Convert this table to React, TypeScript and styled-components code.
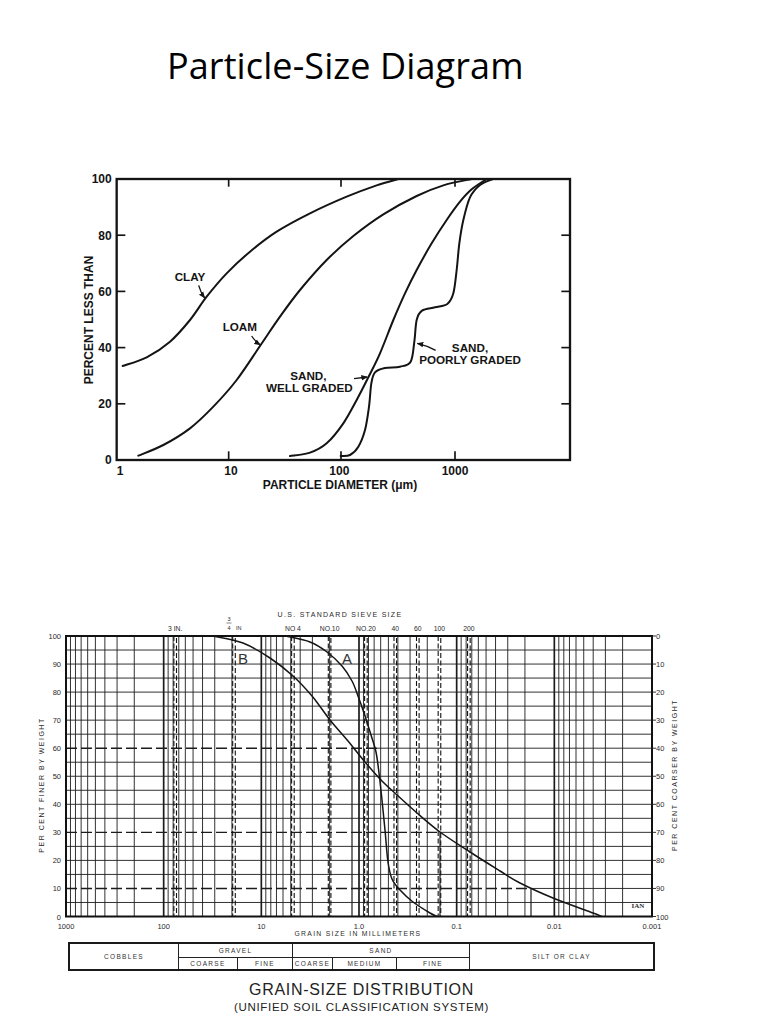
import React from 'react';
import styled, { createGlobalStyle } from 'styled-components';

type Pt = [number, number];

const GlobalStyle = createGlobalStyle`
  html, body {
    margin: 0;
    padding: 0;
    background: #fff;
  }
`;

const Page = styled.main`
  width: 768px;
  height: 1024px;
  overflow: hidden;
  background: #fff;
`;

const Title = styled.h1`
  margin: 0;
  padding: 44px 0 0 167px;
  height: 44px;
  font: 400 36px/44px 'Open Sans', 'Liberation Sans', sans-serif;
  letter-spacing: 0.1px;
  color: #000;
`;

const Figure = styled.figure<{ $top: number; $left: number }>`
  margin: ${p => p.$top}px 0 0 ${p => p.$left}px;
  padding: 0;
  svg {
    display: block;
  }
`;

const Legend = styled.div`
  margin: 2px 0 0 68px;
  width: 587px;
  height: 29px;
  box-sizing: border-box;
  border: 2px solid #1a1a1a;
  display: grid;
  grid-template-columns: 108px 59px 55px 40px 64px 73px 1fr;
  grid-template-rows: 1fr 1fr;
  font-family: 'Liberation Sans', Arial, sans-serif;
  color: #333;
`;

const Cell = styled.div<{ $col: string; $row: string; $first?: boolean; $sub?: boolean }>`
  grid-column: ${p => p.$col};
  grid-row: ${p => p.$row};
  display: flex;
  align-items: center;
  justify-content: center;
  font-size: 6.5px;
  letter-spacing: 1.3px;
  border-left: ${p => (p.$first ? 'none' : '1.5px solid #222')};
  border-top: ${p => (p.$sub ? '1.5px solid #222' : 'none')};
  white-space: nowrap;
`;

const Caption = styled.div`
  margin: 10px 0 0 68px;
  width: 587px;
  text-align: center;
  font-family: 'Liberation Sans', Arial, sans-serif;
  color: #222;
`;

const CaptionMain = styled.div`
  font-size: 16px;
  line-height: 18px;
  letter-spacing: 0.7px;
`;

const CaptionSub = styled.div`
  margin-top: 2px;
  font-size: 11.5px;
  line-height: 13px;
  letter-spacing: 0.7px;
`;

// catmull-rom through the points, as cubic beziers
function smooth(pts: Pt[]): string {
  let d = `M${pts[0][0]},${pts[0][1]}`;
  for (let i = 0; i < pts.length - 1; i++) {
    const p0 = pts[i - 1] || pts[i];
    const p1 = pts[i];
    const p2 = pts[i + 1];
    const p3 = pts[i + 2] || p2;
    const c1x = p1[0] + (p2[0] - p0[0]) / 6;
    const c1y = p1[1] + (p2[1] - p0[1]) / 6;
    const c2x = p2[0] - (p3[0] - p1[0]) / 6;
    const c2y = p2[1] - (p3[1] - p1[1]) / 6;
    d += ` C${c1x.toFixed(1)},${c1y.toFixed(1)} ${c2x.toFixed(1)},${c2y.toFixed(1)} ${p2[0]},${p2[1]}`;
  }
  return d;
}

/* ---------- particle size diagram (drawn in 3x units) ---------- */

const clay: Pt[] = [
  [158, 618], [230, 592], [300, 545], [360, 480], [410, 410], [470, 340], [540, 275],
  [620, 215], [720, 160], [830, 110], [920, 76], [985, 57],
];
const loam: Pt[] = [
  [205, 887], [280, 855], [360, 805], [430, 740], [500, 660], [572, 555], [630, 470],
  [690, 390], [770, 300], [850, 228], [940, 163], [1040, 108], [1120, 76], [1205, 57],
];
const wellGraded: Pt[] = [
  [660, 888], [720, 878], [770, 850], [820, 790], [860, 720], [895, 652], [930, 580],
  [970, 480], [1005, 400], [1040, 330], [1085, 250], [1130, 180], [1170, 125], [1205, 88], [1250, 57],
];
const poorlyGraded: Pt[] = [
  [812, 888], [840, 885], [865, 860], [885, 810], [897, 740], [904, 670], [915, 637],
  [945, 624], [990, 620], [1022, 605], [1033, 545], [1040, 480], [1056, 452], [1095, 442],
  [1132, 432], [1150, 400], [1160, 330], [1168, 250], [1180, 180], [1200, 112], [1230, 75], [1268, 57],
];

const pctY = (p: number) => 900 - p * 8.43;

function ParticleChart() {
  const ink = '#141414';
  const bold = { fontFamily: "'Liberation Sans', Arial, sans-serif", fontWeight: 700, fontSize: 35, fill: ink };
  return (
    <svg width={520} height={340} viewBox="0 0 1560 1020">
      <defs>
        <marker id="arrow" viewBox="0 0 10 10" refX="9" refY="5" markerWidth="20" markerHeight="20" markerUnits="userSpaceOnUse" orient="auto">
          <path d="M0,1 L10,5 L0,9 z" fill={ink} />
        </marker>
      </defs>
      <rect x={140} y={57} width={1360} height={843} fill="none" stroke={ink} strokeWidth={7} />
      {[20, 40, 60, 80].map(p => (
        <g key={p} stroke={ink} strokeWidth={5}>
          <line x1={140} x2={166} y1={pctY(p)} y2={pctY(p)} />
          <line x1={1474} x2={1500} y1={pctY(p)} y2={pctY(p)} />
        </g>
      ))}
      {[476, 813, 1155].map(x => (
        <g key={x} stroke={ink} strokeWidth={5}>
          <line x1={x} x2={x} y1={900} y2={874} />
          <line x1={x} x2={x} y1={57} y2={80} />
        </g>
      ))}
      {[0, 20, 40, 60, 80, 100].map(p => (
        <text key={p} x={125} y={pctY(p) + 13} textAnchor="end" {...bold} fontSize={36}>{p}</text>
      ))}
      {[['1', 150], ['10', 483], ['100', 808], ['1000', 1155]].map(([t, x]) => (
        <text key={t} x={x} y={944} textAnchor="middle" {...bold} fontSize={36}>{t}</text>
      ))}
      <text x={810} y={988} textAnchor="middle" {...bold} fontSize={36}>PARTICLE DIAMETER (μm)</text>
      <text transform="translate(68,480) rotate(-90)" textAnchor="middle" {...bold} fontSize={36}>PERCENT LESS THAN</text>

      <g fill="none" stroke={ink} strokeWidth={6} strokeLinecap="round">
        <path d={smooth(clay)} />
        <path d={smooth(loam)} />
        <path d={smooth(wellGraded)} />
        <path d={smooth(poorlyGraded)} />
      </g>

      <g fill="none" stroke={ink} strokeWidth={4}>
        <path d="M386,376 Q392,398 404,414" markerEnd="url(#arrow)" />
        <path d="M545,528 Q556,545 571,555" markerEnd="url(#arrow)" />
        <path d="M852,656 L892,651" markerEnd="url(#arrow)" />
        <path d="M1097,571 Q1068,556 1042,550" markerEnd="url(#arrow)" />
      </g>

      <text x={314} y={362} {...bold}>CLAY</text>
      <text x={458} y={512} {...bold}>LOAM</text>
      <text x={715} y={660} textAnchor="middle" {...bold}>SAND,</text>
      <text x={718} y={697} textAnchor="middle" {...bold}>WELL GRADED</text>
      <text x={1200} y={575} textAnchor="middle" {...bold}>SAND,</text>
      <text x={1200} y={612} textAnchor="middle" {...bold}>POORLY GRADED</text>
    </svg>
  );
}

/* ---------- grain size distribution (page coordinates) ---------- */

const L = 66;
const R = 652;
const T = 636;
const B = 916.5;
const mmX = (mm: number) => L + (3 - Math.log10(mm)) * ((R - L) / 6);
const pY = (p: number) => B - (p * (B - T)) / 100;

const curveB: Pt[] = [
  [213, 636], [243, 643], [270, 658], [293, 676], [312, 696], [330, 720], [348, 741],
  [365, 762], [381, 780], [397, 795], [417, 813], [440, 832], [470, 852], [500, 871],
  [520, 883], [553, 898], [593, 913], [602, 916.5],
];
const curveA: Pt[] = [
  [286, 636], [310, 642], [327, 652], [342, 666], [352, 681], [358, 696], [364, 713],
  [371, 735], [376, 752], [379, 773], [382, 800], [385, 830], [388, 862], [392, 879],
  [400, 890], [413, 902], [430, 913], [437, 916.5],
];

const sieves: { mm: number; label: string }[] = [
  { mm: 76.2, label: '3 IN.' },
  { mm: 19.05, label: '' },
  { mm: 4.75, label: 'NO 4' },
  { mm: 2.0, label: 'NO.10' },
  { mm: 0.85, label: 'NO.20' },
  { mm: 0.425, label: '40' },
  { mm: 0.25, label: '60' },
  { mm: 0.15, label: '100' },
  { mm: 0.075, label: '200' },
];

// dashed reference lines: percent, where the dash stops, where drops fall
const refLines = [
  { p: 60, end: 377, drops: [352] },
  { p: 30, end: 440, drops: [440] },
  { p: 10, end: 531, drops: [531] },
];

function GrainChart() {
  const ink = '#1c1c1c';
  const small = { fontFamily: "'Liberation Sans', Arial, sans-serif", fontSize: 7.5, fill: '#2a2a2a' };

  const minor: number[] = [];
  for (let d = 3; d > -3; d--) {
    for (let k = 2; k <= 9; k++) minor.push(mmX(k * Math.pow(10, d - 1)));
  }
  const decades = [2, 1, 0, -1, -2].map(d => mmX(Math.pow(10, d)));
  const rows: number[] = [];
  for (let p = 5; p < 100; p += 5) rows.push(p);

  return (
    <svg width={690} height={340} viewBox="20 600 690 340">
      {/* vertical grid */}
      <g stroke={ink} strokeWidth={0.9}>
        {minor.map((x, i) => (
          <line key={i} x1={x} x2={x} y1={T} y2={B} />
        ))}
      </g>
      <g stroke={ink} strokeWidth={1.7}>
        {decades.map((x, i) => (
          <line key={i} x1={x} x2={x} y1={T} y2={B} />
        ))}
      </g>
      {/* horizontal grid */}
      <g stroke={ink}>
        {rows.map(p => {
          const ref = refLines.find(r => r.p === p);
          if (!ref) return <line key={p} x1={L} x2={R} y1={pY(p)} y2={pY(p)} strokeWidth={0.9} />;
          return (
            <g key={p}>
              <line x1={L} x2={ref.end} y1={pY(p)} y2={pY(p)} strokeWidth={1.4} strokeDasharray="11 4" />
              <line x1={ref.end} x2={R} y1={pY(p)} y2={pY(p)} strokeWidth={0.9} />
              {ref.drops.map(x => (
                <line key={x} x1={x} x2={x} y1={pY(p)} y2={B} strokeWidth={1.2} />
              ))}
            </g>
          );
        })}
      </g>
      {/* sieve lines */}
      <g stroke="#111" strokeWidth={1.1} strokeDasharray="5 2.5">
        {sieves.map(s => (
          <g key={s.mm}>
            <line x1={mmX(s.mm) - 1.3} x2={mmX(s.mm) - 1.3} y1={T} y2={B} />
            <line x1={mmX(s.mm) + 1.3} x2={mmX(s.mm) + 1.3} y1={T + 2} y2={B} />
          </g>
        ))}
      </g>
      <rect x={L} y={T} width={R - L} height={B - T} fill="none" stroke="#111" strokeWidth={2} />

      {/* curves */}
      <g fill="none" stroke="#151515" strokeWidth={1.5}>
        <path d={smooth(curveB)} />
        <path d={smooth(curveA)} />
      </g>
      <text x={243} y={664} textAnchor="middle" fontFamily="'Liberation Sans', Arial, sans-serif" fontSize={15} fill="#333">B</text>
      <text x={347} y={664} textAnchor="middle" fontFamily="'Liberation Sans', Arial, sans-serif" fontSize={15} fill="#333">A</text>

      {/* left axis */}
      {rows.concat([0, 100]).filter(p => p % 10 === 0).map(p => (
        <text key={p} x={61} y={pY(p) + 3} textAnchor="end" {...small}>{p}</text>
      ))}
      <text transform="translate(44,785) rotate(-90)" textAnchor="middle" {...small} fontSize={7} letterSpacing={1.5}>
        PER CENT FINER BY WEIGHT
      </text>

      {/* right axis */}
      {[0, 10, 20, 30, 40, 50, 60, 70, 80, 90, 100].map(q => (
        <g key={q}>
          <line x1={R} x2={R + 4} y1={pY(100 - q)} y2={pY(100 - q)} stroke={ink} strokeWidth={0.9} />
          <text x={R + 4} y={pY(100 - q) + 3} {...small}>{q}</text>
        </g>
      ))}
      <text transform="translate(677,775) rotate(-90)" textAnchor="middle" {...small} fontSize={7} letterSpacing={1.5}>
        PER CENT COARSER BY WEIGHT
      </text>

      {/* bottom axis */}
      {[['1000', 3], ['100', 2], ['10', 1], ['1.0', 0], ['0.1', -1], ['0.01', -2], ['0.001', -3]].map(([t, d]) => (
        <text key={t} x={mmX(Math.pow(10, d as number))} y={929} textAnchor="middle" {...small}>{t}</text>
      ))}
      <text x={358} y={936} textAnchor="middle" {...small} fontSize={6.8} letterSpacing={1.3}>
        GRAIN SIZE IN MILLIMETERS
      </text>

      {/* top axis: sieve sizes */}
      <text x={340} y={617} textAnchor="middle" {...small} fontSize={7} letterSpacing={1.3}>
        U.S. STANDARD SIEVE SIZE
      </text>
      {sieves.filter(s => s.label).map(s => (
        <text key={s.mm} x={mmX(s.mm)} y={631} textAnchor="middle" {...small} fontSize={6.8}>{s.label}</text>
      ))}
      <g {...small} fontSize={5.5}>
        <text x={229} y={621} textAnchor="middle">3</text>
        <line x1={226.5} x2={231.5} y1={623} y2={623} stroke="#333" strokeWidth={0.6} />
        <text x={229} y={630} textAnchor="middle">4</text>
        <text x={236} y={630}>IN</text>
      </g>

      <text x={638} y={908} textAnchor="middle" fontFamily="'Liberation Serif', serif" fontSize={7} fontWeight={700} fill="#333">
        IAN
      </text>
    </svg>
  );
}

export default function App() {
  return (
    <Page>
      <GlobalStyle />
      <Title>Particle-Size Diagram</Title>
      <Figure $top={72} $left={70}>
        <ParticleChart />
      </Figure>
      <Figure $top={100} $left={20}>
        <GrainChart />
      </Figure>
      <Legend>
        <Cell $col="1" $row="1 / 3" $first>COBBLES</Cell>
        <Cell $col="2 / 4" $row="1">GRAVEL</Cell>
        <Cell $col="4 / 7" $row="1">SAND</Cell>
        <Cell $col="7" $row="1 / 3">SILT OR CLAY</Cell>
        <Cell $col="2" $row="2" $sub>COARSE</Cell>
        <Cell $col="3" $row="2" $sub>FINE</Cell>
        <Cell $col="4" $row="2" $sub>COARSE</Cell>
        <Cell $col="5" $row="2" $sub>MEDIUM</Cell>
        <Cell $col="6" $row="2" $sub>FINE</Cell>
      </Legend>
      <Caption>
        <CaptionMain>GRAIN-SIZE DISTRIBUTION</CaptionMain>
        <CaptionSub>(UNIFIED SOIL CLASSIFICATION SYSTEM)</CaptionSub>
      </Caption>
    </Page>
  );
}
